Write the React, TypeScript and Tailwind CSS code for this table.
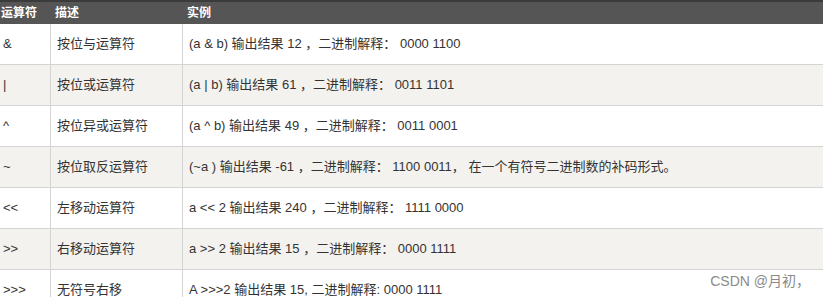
const rows = [
  { op: "&", desc: "按位与运算符", ex: "(a & b) 输出结果 12 ，二进制解释： 0000 1100", trim: false },
  { op: "|", desc: "按位或运算符", ex: "(a | b) 输出结果 61 ，二进制解释： 0011 1101", trim: false },
  { op: "^", desc: "按位异或运算符", ex: "(a ^ b) 输出结果 49 ，二进制解释： 0011 0001", trim: false },
  {
    op: "~",
    desc: "按位取反运算符",
    ex: "(~a ) 输出结果 -61 ，二进制解释： 1100 0011， 在一个有符号二进制数的补码形式。",
    trim: true,
  },
  { op: "<<", desc: "左移动运算符", ex: "a << 2 输出结果 240 ，二进制解释： 1111 0000", trim: false },
  { op: ">>", desc: "右移动运算符", ex: "a >> 2 输出结果 15 ，二进制解释： 0000 1111", trim: false },
  { op: ">>>", desc: "无符号右移", ex: "A >>>2 输出结果 15, 二进制解释: 0000 1111", trim: false },
];

const App = () => {
  return (
    <div className="relative w-[823px] h-[297px] overflow-hidden bg-white font-['Liberation_Sans','Noto_Sans_CJK_SC',sans-serif]">
      {/* header */}
      <div className="h-[2px] bg-[#3b3b3b]" />
      <div className="grid grid-cols-[51px_132px_1fr] h-[22px] bg-[#555555] text-white text-[12px] font-bold leading-[22px]">
        <div className="pl-[1px]">运算符</div>
        <div className="pl-[4px]">描述</div>
        <div className="pl-[4px]">实例</div>
      </div>

      {/* body */}
      {rows.map((r, i) => (
        <div
          key={r.op}
          className={`grid grid-cols-[51px_132px_1fr] h-[41px] border-b border-[#d4d4d4] text-[13px] text-[#333333] ${
            i % 2 === 1 ? "bg-[#f3f2ef]" : "bg-white"
          }`}
        >
          <div className="flex items-center pl-[3px] border-r border-[#d4d4d4]">{r.op}</div>
          <div className="flex items-center pl-[6px] border-r border-[#d4d4d4]">{r.desc}</div>
          <div
            className={`flex items-center pl-[6px] whitespace-pre ${
              r.trim ? "" : "[text-spacing-trim:space-all]"
            }`}
          >
            {r.ex}
          </div>
        </div>
      ))}

      <div className="absolute right-[13px] bottom-[5px] text-[14px] text-[#8a8a8a] bg-white">
        CSDN @月初，
      </div>
    </div>
  );
};

export default App;
